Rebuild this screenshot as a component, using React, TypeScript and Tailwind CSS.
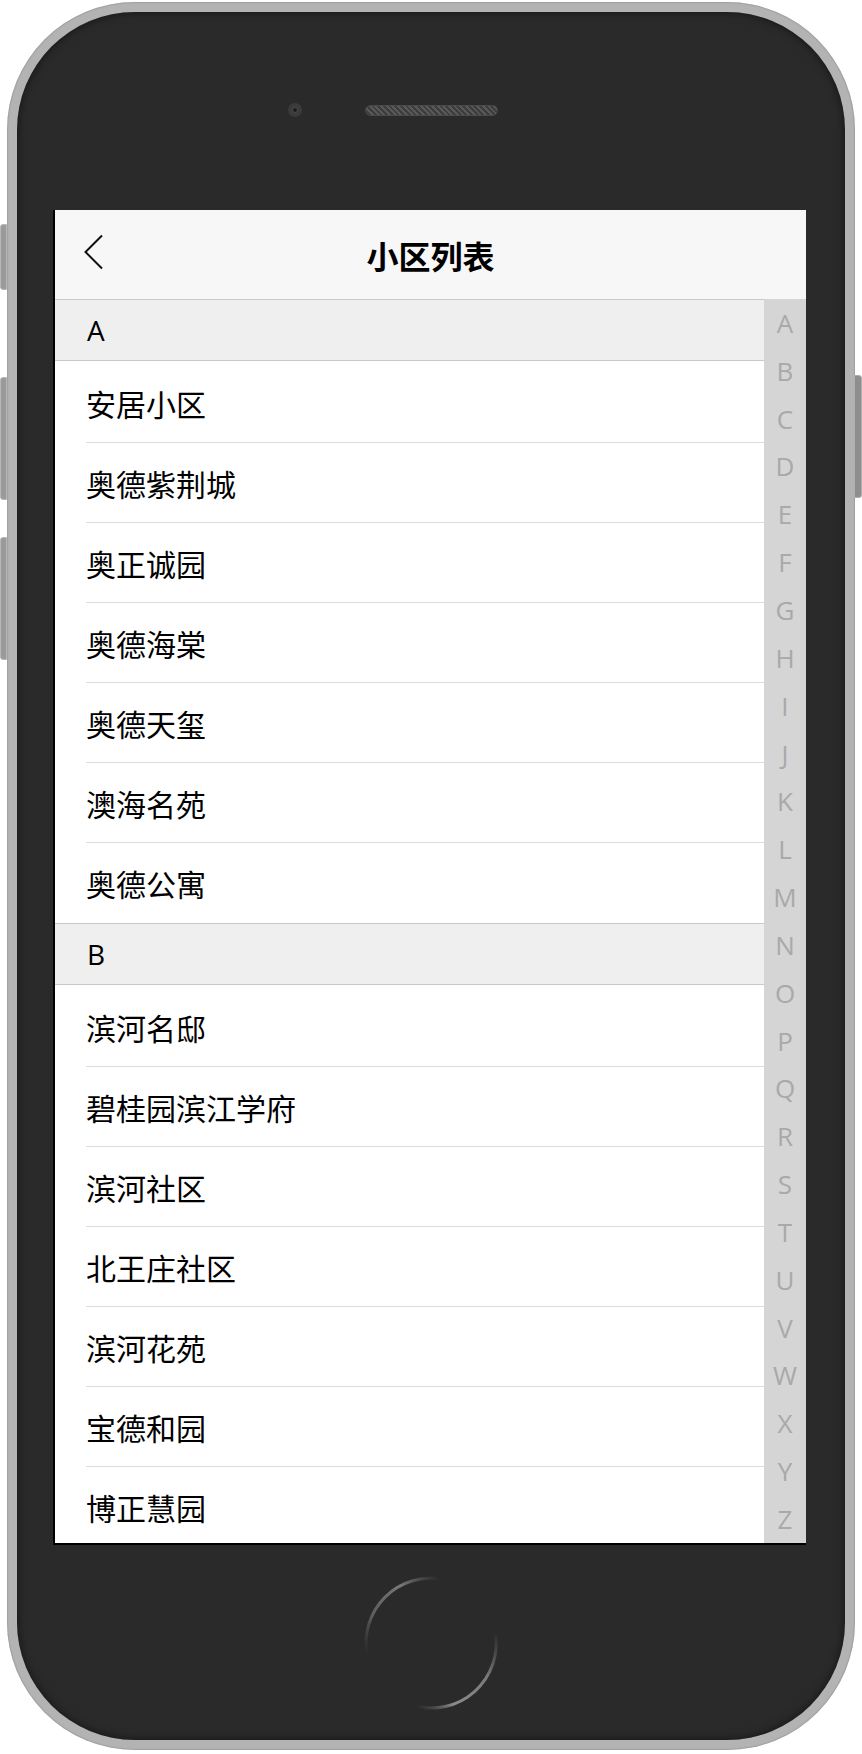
import React from "react";

const sections: { letter: string; items: string[] }[] = [
  {
    letter: "A",
    items: ["安居小区", "奥德紫荆城", "奥正诚园", "奥德海棠", "奥德天玺", "澳海名苑", "奥德公寓"],
  },
  {
    letter: "B",
    items: ["滨河名邸", "碧桂园滨江学府", "滨河社区", "北王庄社区", "滨河花苑", "宝德和园", "博正慧园"],
  },
];

const letters = "ABCDEFGHIJKLMNOPQRSTUVWXYZ".split("");

function HomeButton() {
  return (
    <svg width="140" height="140" viewBox="0 0 140 140">
      <defs>
        <linearGradient id="g1" gradientUnits="userSpaceOnUse" x1="78" y1="5" x2="4" y2="80">
          <stop offset="0" stopColor="#6a6a6a" stopOpacity="0" />
          <stop offset="0.3" stopColor="#777" stopOpacity="1" />
          <stop offset="0.7" stopColor="#6a6a6a" stopOpacity="0.8" />
          <stop offset="1" stopColor="#555" stopOpacity="0" />
        </linearGradient>
        <linearGradient id="g2" gradientUnits="userSpaceOnUse" x1="136" y1="58" x2="58" y2="136">
          <stop offset="0" stopColor="#6a6a6a" stopOpacity="0" />
          <stop offset="0.35" stopColor="#7a7a7a" stopOpacity="1" />
          <stop offset="0.75" stopColor="#8a8a8a" stopOpacity="1" />
          <stop offset="1" stopColor="#666" stopOpacity="0" />
        </linearGradient>
      </defs>
      <path d="M 80 5.8 A 65 65 0 0 0 5.8 80" fill="none" stroke="url(#g1)" strokeWidth="3" />
      <path d="M 134.8 62 A 65 65 0 0 1 55 133.2" fill="none" stroke="url(#g2)" strokeWidth="3" />
    </svg>
  );
}

export default function App() {
  return (
    <div className="relative w-[862px] h-[1754px] bg-white overflow-hidden font-['Open_Sans','Noto_Sans_CJK_SC',sans-serif] pt-[2px] pl-[7px]">
      {/* side buttons */}
      <div className="absolute left-0 top-[224px] w-[7px] h-[66px] rounded-l-[3px] bg-[#9a9a9a] border border-[#b8b8b8]" />
      <div className="absolute left-0 top-[377px] w-[7px] h-[123px] rounded-l-[3px] bg-[#9a9a9a] border border-[#b8b8b8]" />
      <div className="absolute left-0 top-[537px] w-[7px] h-[123px] rounded-l-[3px] bg-[#9a9a9a] border border-[#b8b8b8]" />
      <div className="absolute right-0 top-[375px] w-[8px] h-[123px] rounded-r-[3px] bg-[#8e8e8e] border border-[#b0b0b0]" />

      <div className="w-[848px] h-[1748px] rounded-[128px] bg-[#b3b3b3] p-[10px] shadow-[inset_0_0_2px_rgba(0,0,0,0.35)]">
        <div className="h-full rounded-[118px] bg-[#2a2a2a] shadow-[inset_0_0_10px_rgba(0,0,0,0.55)] flex flex-col">
          {/* top area */}
          <div className="h-[198px] pt-[91px] pl-[271px]">
            <div className="flex items-center gap-[63px]">
              <div className="w-[14px] h-[14px] rounded-full bg-[#3b3b3b] flex items-center justify-center">
                <div className="w-[6px] h-[6px] rounded-full bg-[#1c1c1c] border border-[#4a4a4a]" />
              </div>
              <div className="w-[133px] h-[11px] rounded-full bg-[repeating-linear-gradient(45deg,#585858_0_2px,#3c3c3c_2px_4px)] border border-[#4a4a4a]" />
            </div>
          </div>

          {/* screen */}
          <div className="pl-[36px]">
            <div className="w-[753px] h-[1335px] border-l-2 border-b-2 border-black bg-white flex flex-col overflow-hidden">
              {/* header */}
              <div className="h-[89px] shrink-0 bg-[#f7f7f7] grid grid-cols-[1fr_auto_1fr] items-center">
                <div className="pl-[27px] mb-[6px] flex items-center">
                  <svg width="22" height="36" viewBox="0 0 22 36">
                    <path d="M20 1.5 L3.5 18 L20 34.5" fill="none" stroke="#111" strokeWidth="2" />
                  </svg>
                </div>
                <div className="text-[32px] leading-none font-bold text-black font-['Noto_Sans_CJK_SC',sans-serif]">
                  小区列表
                </div>
                <div />
              </div>

              {/* body */}
              <div className="flex h-[1244px]">
                <div className="flex-1 overflow-hidden">
                  {sections.map((s) => (
                    <div key={s.letter}>
                      <div className="h-[62px] border-y border-[#c9c9c9] bg-[#efefef] flex items-center pl-[32px] text-[28px] leading-none text-black">
                        {s.letter}
                      </div>
                      {s.items.map((it, i) => (
                        <div
                          key={it}
                          className={
                            (i === 0 ? "h-[82px] pt-[2px] " : "h-[80px] ") +
                            "ml-[31px] flex items-center text-[30px] leading-none text-black font-['Noto_Sans_CJK_SC',sans-serif] " +
                            (i === s.items.length - 1 ? "" : "border-b border-[#dcdcdc]")
                          }
                        >
                          {it}
                        </div>
                      ))}
                    </div>
                  ))}
                </div>
                <div className="w-[42px] shrink-0 bg-[#d5d5d5] flex flex-col">
                  {letters.map((l) => (
                    <div
                      key={l}
                      className="flex-1 flex items-center justify-center text-[26px] leading-none text-[#a9a9a9]"
                    >
                      {l}
                    </div>
                  ))}
                </div>
              </div>
            </div>
          </div>

          {/* home button */}
          <div className="flex-1 flex items-center justify-center">
            <HomeButton />
          </div>
        </div>
      </div>
    </div>
  );
}
